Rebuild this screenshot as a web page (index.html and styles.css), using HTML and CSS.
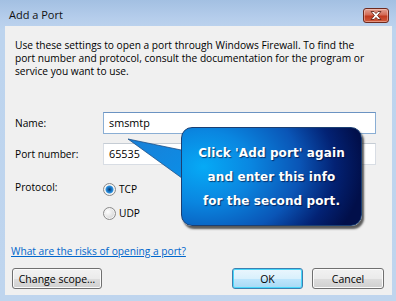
FILE: index.html
```html
<!DOCTYPE html>
<html lang="en">
<head>
    <meta charset="UTF-8">
    <meta name="viewport" content="width=device-width, initial-scale=1.0">
    <title>Add a Port</title>
    <link rel="stylesheet" href="styles.css">
</head>
<body>
    <div class="window">
        <div class="titlebar">
            <span class="title">Add a Port</span>
            <button class="close" aria-label="Close">
                <svg width="14" height="9" viewBox="0 0 14 9">
                    <path d="M2 0.5 L5 0.5 L7 2.6 L9 0.5 L12 0.5 L8.6 4.5 L12 8.5 L9 8.5 L7 6.4 L5 8.5 L2 8.5 L5.4 4.5 Z" fill="#fff" stroke="#5b1b10" stroke-width="0.8" stroke-linejoin="round"/>
                </svg>
            </button>
        </div>
        <div class="client">
            <p class="intro">Use these settings to open a port through Windows Firewall. To find the port number and protocol, consult the documentation for the program or service you want to use.</p>

            <div class="form">
                <label class="label">Name:</label>
                <div class="input focused">smsmtp</div>
                <label class="label">Port number:</label>
                <div class="input">65535</div>
                <label class="label proto">Protocol:</label>
                <div class="radios">
                    <div class="radio"><span class="dot checked"></span>TCP</div>
                    <div class="radio"><span class="dot"></span>UDP</div>
                </div>
            </div>

            <a class="risk" href="#">What are the risks of opening a port?</a>

            <div class="buttons">
                <button class="btn scope">Change scope…</button>
                <button class="btn ok">OK</button>
                <button class="btn">Cancel</button>
            </div>

            <!-- help bubble drawn over the form -->
            <svg class="tail" width="60" height="50" viewBox="0 0 60 50">
                <defs>
                    <linearGradient id="tailfill" x1="0" y1="0" x2="1" y2="1">
                        <stop offset="0" stop-color="#1a7fd6"/>
                        <stop offset="1" stop-color="#0a8fe8"/>
                    </linearGradient>
                </defs>
                <path d="M0 2 L58 14 L58 44 Z" fill="url(#tailfill)" stroke="#1d4f86" stroke-width="0.8"/>
            </svg>
            <div class="callout">
                <p>Click 'Add port' again<br>and enter this info<br>for the second port.</p>
            </div>
        </div>
    </div>
</body>
</html>
```

FILE: styles.css
```css
html, body {
    margin: 0;
    padding: 0;
}

body {
    width: 396px;
    height: 301px;
    overflow: hidden;
    font-family: "Open Sans", "Noto Sans", sans-serif;
    font-size: 10.2px;
    color: #000;
}

.window {
    width: 396px;
    height: 301px;
    box-sizing: border-box;
    background: linear-gradient(#a3c0e2 0px, #b5cdeb 18px, #bdd4ee 30px, #bfd5ee 100%);
    display: flex;
    flex-direction: column;
}

.titlebar {
    height: 26px;
    box-sizing: border-box;
    padding: 0 7px 0 9px;
    display: flex;
    align-items: flex-start;
    justify-content: space-between;
}

.title {
    font-size: 11px;
    line-height: 14px;
    margin-top: 8px;
    color: #111;
}

.close {
    margin-top: 8px;
    width: 26px;
    height: 15px;
    padding: 0;
    border: 1px solid #6e2a1e;
    border-radius: 3px;
    background: linear-gradient(#e2a193 0%, #d46a55 45%, #c1391f 55%, #cf5b3c 100%);
    box-shadow: inset 0 0 0 1px rgba(255, 220, 210, 0.45);
    display: flex;
    align-items: center;
    justify-content: center;
}

.client {
    position: relative;
    flex: 1;
    margin: 0 4px 6px 5px;
    background-color: #f0f0f0;
    padding: 0 8px 6px 7px;
    display: flex;
    flex-direction: column;
}

.intro {
    margin: 13px 0 0 3px;
    line-height: 13px;
    width: 350px;
}

.form {
    margin: 34px 0 0 3px;
    display: grid;
    grid-template-columns: 88px 273px;
    row-gap: 9px;
    align-items: center;
}

.label {
    line-height: 13px;
}

.input {
    height: 22px;
    box-sizing: border-box;
    border: 1px solid #d8dde4;
    border-top-color: #c5ccd4;
    background-color: #fff;
    padding: 0 5px;
    line-height: 20px;
    font-size: 10.8px;
}

.input.focused {
    border-color: #8aaed4;
    border-top-color: #6b93c2;
}

.proto {
    align-self: start;
    margin-top: 7px;
}

.radios {
    margin-top: 7px;
    display: flex;
    flex-direction: column;
    gap: 8px;
}

.radio {
    height: 16px;
    display: flex;
    align-items: center;
    gap: 3px;
}

.dot {
    width: 13px;
    height: 13px;
    box-sizing: border-box;
    border-radius: 50%;
    border: 1px solid #8a8a8a;
    background: radial-gradient(circle at 35% 35%, #ffffff 0%, #e6e6e6 45%, #c8c8c8 100%);
    box-shadow: inset 0 0 0 1px #f4f4f4;
}

.dot.checked {
    background: radial-gradient(circle, #063a70 0px, #1b78c8 2.5px, #2f92de 3.5px, #f6f6f6 4.5px, #dcdcdc 100%);
}

.risk {
    margin: 24px 0 0 -1px;
    color: #0066cc;
    line-height: 13px;
    align-self: flex-start;
}

.buttons {
    margin-top: 10px;
    display: flex;
    gap: 9px;
}

.btn {
    height: 21px;
    width: 72px;
    box-sizing: border-box;
    font-family: "Open Sans", "Noto Sans", sans-serif;
    font-size: 10.5px;
    white-space: nowrap;
    color: #000;
    border: 1px solid #707070;
    border-radius: 3px;
    background: linear-gradient(#f2f2f2 0%, #ebebeb 50%, #dddddd 51%, #cfcfcf 100%);
    box-shadow: inset 0 0 0 1px #fbfbfb;
    padding: 0 4px;
}

.scope {
    width: 90px;
}

.ok {
    margin-left: auto;
    width: 71px;
    border-color: #3c7fb1;
    background: linear-gradient(#eaf6fd 0%, #d9f0fc 50%, #bee6fd 51%, #a7d9f5 100%);
    box-shadow: inset 0 0 0 1px #48d8fb;
}

.tail {
    position: absolute;
    left: 123px;
    top: 111px;
}

.callout {
    position: absolute;
    left: 176px;
    top: 101px;
    width: 181px;
    height: 99px;
    box-sizing: border-box;
    border: 1px solid #1b3f72;
    border-radius: 11px;
    background: radial-gradient(ellipse 160px 120px at 12% 40%, #06aaf6 0%, #0a86e0 30%, #0a55b6 60%, #032274 82%, #010f4a 100%);
    box-shadow: 2px 3px 2px rgba(40, 40, 40, 0.75);
    display: flex;
    align-items: center;
    justify-content: center;
}

.callout p {
    margin: 0;
    color: #fff;
    font-family: "DejaVu Sans", Verdana, sans-serif;
    font-weight: bold;
    font-size: 12px;
    letter-spacing: 0.1px;
    line-height: 24px;
    text-align: center;
    text-shadow: 1px 1px 1px rgba(0, 0, 40, 0.6);
}
```
